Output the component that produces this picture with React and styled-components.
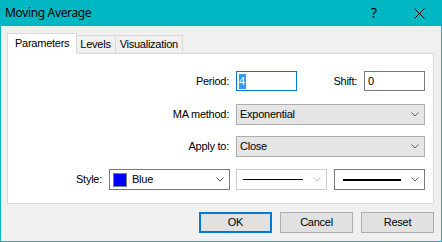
import React from "react";
import styled, { createGlobalStyle } from "styled-components";

const GlobalStyle = createGlobalStyle`
  html, body { margin: 0; padding: 0; }
  body { background: #ffffff; overflow: hidden; }
`;

const Window = styled.div`
  box-sizing: border-box;
  width: 442px;
  height: 242px;
  border: 1px solid #00b7c3;
  background: #f0f0f0;
  display: flex;
  flex-direction: column;
  font-family: "Liberation Sans", Arial, sans-serif;
  font-size: 11px;
  line-height: 13px;
  letter-spacing: -0.25px;
  color: #000;
`;

const TitleBar = styled.div`
  flex: none;
  height: 25px;
  background: #00b7c3;
  display: flex;
  align-items: stretch;
`;

const Title = styled.div`
  flex: 1;
  padding: 0 0 2px 4px;
  box-sizing: border-box;
  font-family: "Noto Sans", sans-serif;
  font-size: 12px;
  letter-spacing: -0.35px;
  line-height: 23px;
  color: #000;
`;

const CaptionButton = styled.div`
  width: ${(p) => p.$w}px;
  display: flex;
  align-items: center;
  justify-content: center;
`;

const HelpGlyph = styled.span`
  font-family: "Noto Sans", sans-serif;
  font-size: 14px;
  letter-spacing: 0;
  line-height: 1;
  margin-top: -2px;
`;

const Body = styled.div`
  flex: 1;
  display: flex;
  flex-direction: column;
  padding: 7px 7px 8px 6px;
`;

const TabStrip = styled.div`
  display: flex;
  align-items: flex-end;
  height: 21px;
  margin-bottom: -1px;
  padding-left: 2px;
  position: relative;
  z-index: 1;
`;

const Tab = styled.div`
  box-sizing: border-box;
  height: ${(p) => (p.$active ? 21 : 18)}px;
  margin: ${(p) => (p.$active ? "0 -2px" : "0 0 1px 0")};
  padding: ${(p) => (p.$active ? "3px 7px 0 7px" : "2px 4px 0")};
  border: 1px solid #d9d9d9;
  border-bottom: none;
  border-left-style: ${(p) => (p.$joined ? "none" : "solid")};
  background: ${(p) => (p.$active ? "#ffffff" : "#f0f0f0")};
  position: relative;
  z-index: ${(p) => (p.$active ? 2 : 1)};
  white-space: nowrap;
`;

const Panel = styled.div`
  box-sizing: border-box;
  height: 151px;
  background: #ffffff;
  border: 1px solid #d9d9d9;
  padding: 17px 8px 0 0;
  display: flex;
  flex-direction: column;
`;

const Row = styled.div`
  display: flex;
  align-items: center;
  justify-content: flex-end;
  height: ${(p) => p.$h || 21}px;
  margin-top: ${(p) => p.$gap || 0}px;
`;

const Label = styled.span`
  margin-right: 7px;
  white-space: nowrap;
`;

const Field = styled.div`
  width: 189px;
  display: flex;
  align-items: center;
`;

const ShiftLabel = styled.span`
  margin: 0 7px 0 auto;
`;

const TextBox = styled.div`
  box-sizing: border-box;
  width: 61px;
  height: 20px;
  border: 1px solid ${(p) => (p.$focused ? "#0078d7" : "#7a7a7a")};
  background: #ffffff;
  padding-left: ${(p) => (p.$focused ? 2 : 3)}px;
  display: flex;
  align-items: center;
`;

const Selection = styled.span`
  background: #3399ff;
  color: #ffffff;
  line-height: 15px;
  padding-right: 1px;
`;

const comboColors = {
  dropdown: { bg: "#e5e5e5", border: "#adadad", arrow: "#606060" },
  field: { bg: "#ffffff", border: "#7a7a7a", arrow: "#606060" },
  disabled: { bg: "#ffffff", border: "#cccccc", arrow: "#bfbfbf" },
};

const ComboBox = styled.div`
  box-sizing: border-box;
  width: ${(p) => p.$w}px;
  height: 21px;
  flex: none;
  margin-left: ${(p) => p.$gap || 0}px;
  display: flex;
  align-items: center;
  border: 1px solid ${(p) => comboColors[p.$kind].border};
  background: ${(p) => comboColors[p.$kind].bg};
  padding: 0 5px 0 3px;
`;

const ComboText = styled.span`
  flex: 1;
  white-space: nowrap;
`;

const Swatch = styled.span`
  box-sizing: border-box;
  width: 14px;
  height: 14px;
  border: 1px solid #808080;
  background: ${(p) => p.$color};
  margin-right: 5px;
  flex: none;
`;

const LineSample = styled.span`
  display: block;
  width: ${(p) => p.$len}px;
  height: ${(p) => p.$thick}px;
  margin-left: ${(p) => p.$indent}px;
  background: #000000;
`;

const Spacer = styled.span`
  flex: 1;
`;

const ButtonRow = styled.div`
  display: flex;
  justify-content: flex-end;
  gap: 8px;
  margin-top: 8px;
`;

const Button = styled.div`
  box-sizing: border-box;
  width: 73px;
  height: 21px;
  border: ${(p) => (p.$default ? "2px solid #0078d7" : "1px solid #adadad")};
  background: #e1e1e1;
  display: flex;
  align-items: center;
  justify-content: center;
`;

const Chevron = ({ color }) => (
  <svg width="8" height="5" viewBox="0 0 8 5">
    <polyline points="0.5,0.5 4,4 7.5,0.5" fill="none" stroke={color} strokeWidth="1" />
  </svg>
);

const CloseIcon = () => (
  <svg width="11" height="11" viewBox="0 0 11 11">
    <path d="M0.5 0.5 L10.5 10.5 M10.5 0.5 L0.5 10.5" stroke="#000" strokeWidth="1" fill="none" />
  </svg>
);

const Combo = ({ kind, w, gap, children }) => (
  <ComboBox $kind={kind} $w={w} $gap={gap}>
    {children}
    <Chevron color={comboColors[kind].arrow} />
  </ComboBox>
);

export default function App() {
  return (
    <>
      <GlobalStyle />
      <Window>
        <TitleBar>
          <Title>Moving Average</Title>
          <CaptionButton $w={46}>
            <HelpGlyph>?</HelpGlyph>
          </CaptionButton>
          <CaptionButton $w={44}>
            <CloseIcon />
          </CaptionButton>
        </TitleBar>
        <Body>
          <TabStrip>
            <Tab $active>Parameters</Tab>
            <Tab>Levels</Tab>
            <Tab $joined>Visualization</Tab>
          </TabStrip>
          <Panel>
            <Row $h={20}>
              <Label>Period:</Label>
              <Field>
                <TextBox $focused>
                  <Selection>4</Selection>
                </TextBox>
                <ShiftLabel>Shift:</ShiftLabel>
                <TextBox>0</TextBox>
              </Field>
            </Row>
            <Row $gap={13}>
              <Label>MA method:</Label>
              <Combo kind="dropdown" w={189}>
                <ComboText>Exponential</ComboText>
              </Combo>
            </Row>
            <Row $gap={11}>
              <Label>Apply to:</Label>
              <Combo kind="dropdown" w={189}>
                <ComboText>Close</ComboText>
              </Combo>
            </Row>
            <Row $gap={12}>
              <Label>Style:</Label>
              <Combo kind="field" w={121}>
                <Swatch $color="#0000ff" />
                <ComboText>Blue</ComboText>
              </Combo>
              <Combo kind="disabled" w={91} gap={6}>
                <LineSample $len={60} $thick={1} $indent={3} />
                <Spacer />
              </Combo>
              <Combo kind="field" w={91} gap={7}>
                <LineSample $len={58} $thick={2} $indent={5} />
                <Spacer />
              </Combo>
            </Row>
          </Panel>
          <ButtonRow>
            <Button $default>OK</Button>
            <Button>Cancel</Button>
            <Button>Reset</Button>
          </ButtonRow>
        </Body>
      </Window>
    </>
  );
}
